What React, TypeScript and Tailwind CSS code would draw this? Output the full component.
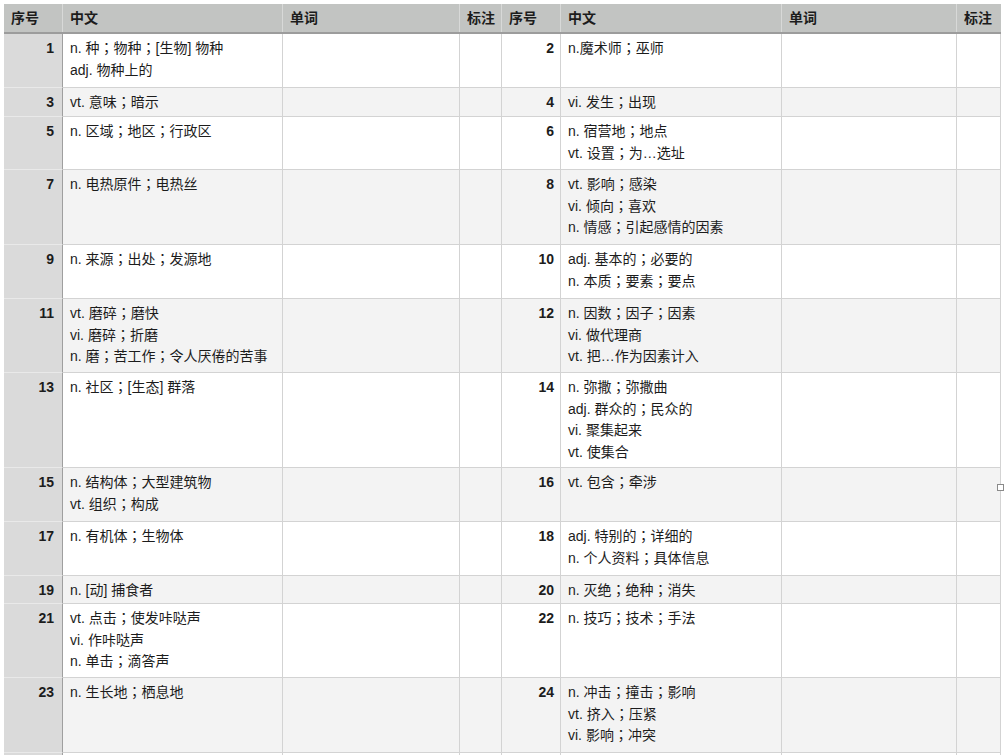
import React from "react";

type Row = {
  h: string;
  a: number;
  aText: string[];
  b: number;
  bText: string[];
};

// row heights follow the sheet, one class per row
const rows: Row[] = [
  { h: "h-[54px]", a: 1, aText: ["n. 种；物种；[生物] 物种", "adj. 物种上的"], b: 2, bText: ["n.魔术师；巫师"] },
  { h: "h-[29px]", a: 3, aText: ["vt. 意味；暗示"], b: 4, bText: ["vi. 发生；出现"] },
  { h: "h-[53px]", a: 5, aText: ["n. 区域；地区；行政区"], b: 6, bText: ["n. 宿营地；地点", "vt. 设置；为…选址"] },
  { h: "h-[75px]", a: 7, aText: ["n. 电热原件；电热丝"], b: 8, bText: ["vt. 影响；感染", "vi. 倾向；喜欢", "n. 情感；引起感情的因素"] },
  { h: "h-[54px]", a: 9, aText: ["n. 来源；出处；发源地"], b: 10, bText: ["adj. 基本的；必要的", "n. 本质；要素；要点"] },
  { h: "h-[74px]", a: 11, aText: ["vt. 磨碎；磨快", "vi. 磨碎；折磨", "n. 磨；苦工作；令人厌倦的苦事"], b: 12, bText: ["n. 因数；因子；因素", "vi. 做代理商", "vt. 把…作为因素计入"] },
  { h: "h-[95px]", a: 13, aText: ["n. 社区；[生态] 群落"], b: 14, bText: ["n. 弥撒；弥撒曲", "adj. 群众的；民众的", "vi. 聚集起来", "vt. 使集合"] },
  { h: "h-[54px]", a: 15, aText: ["n. 结构体；大型建筑物", "vt. 组织；构成"], b: 16, bText: ["vt. 包含；牵涉"] },
  { h: "h-[54px]", a: 17, aText: ["n. 有机体；生物体"], b: 18, bText: ["adj. 特别的；详细的", "n. 个人资料；具体信息"] },
  { h: "h-[28px]", a: 19, aText: ["n. [动] 捕食者"], b: 20, bText: ["n. 灭绝；绝种；消失"] },
  { h: "h-[74px]", a: 21, aText: ["vt. 点击；使发咔哒声", "vi. 作咔哒声", "n. 单击；滴答声"], b: 22, bText: ["n. 技巧；技术；手法"] },
  { h: "h-[75px]", a: 23, aText: ["n. 生长地；栖息地"], b: 24, bText: ["n. 冲击；撞击；影响", "vt. 挤入；压紧", "vi. 影响；冲突"] },
  { h: "h-[54px]", a: 25, aText: [], b: 26, bText: [] },
];

const cols = "grid grid-cols-[59px_220px_177px_42px_59px_221px_175px_44px]";
const line = "border-r border-b border-[#d3d3d3]";

// the sheet centres the full-width semicolon, the TC face does the same
const Text = ({ t }: { t: string }) => {
  const parts = t.split("；");
  return (
    <>
      {parts.map((p, i) => (
        <React.Fragment key={i}>
          {p}
          {i < parts.length - 1 && (
            <span className="leading-[0]" style={{ fontFamily: '"Noto Sans CJK TC", sans-serif' }}>
              ；
            </span>
          )}
        </React.Fragment>
      ))}
    </>
  );
};

const Lines = ({ items }: { items: string[] }) => (
  <div className="pl-[7px] pt-[4px] leading-[21.5px]">
    {items.map((t, i) => (
      <div key={i} className="whitespace-nowrap">
        <Text t={t} />
      </div>
    ))}
  </div>
);

const App = () => {
  const headers = ["序号", "中文", "单词", "标注", "序号", "中文", "单词", "标注"];

  return (
    <div
      className="relative h-[755px] overflow-hidden bg-white pl-[4px] pt-[4px] text-[14px] text-[#1c1c1c]"
      style={{ fontFamily: '"Liberation Sans", "Noto Sans CJK SC", sans-serif' }}
    >
      <div className="w-[997px]">
        <div className={`${cols} h-[30px] bg-[#c2c4c2] border-b-2 border-[#9c9c9c] font-bold`}>
          {headers.map((h, i) => (
            <div
              key={i}
              className={`flex items-center pl-[7px] border-r ${i === 7 ? "border-[#c2c4c2]" : "border-[#d8d9d8]"}`}
            >
              {h}
            </div>
          ))}
        </div>

        {rows.map((r, i) => {
          const bg = i % 2 === 1 ? "bg-[#f3f3f3]" : "bg-white";
          return (
            <div key={r.a} className={`${cols} ${r.h}`}>
              <div className="bg-[#dadada] border-b border-r border-b-[#e9e9e9] border-r-[#9f9f9f] pr-[8px] pt-[4px] text-right font-bold leading-[21.5px]">
                {r.aText.length ? r.a : ""}
              </div>
              <div className={`${bg} ${line}`}>
                <Lines items={r.aText} />
              </div>
              <div className={`${bg} ${line}`} />
              <div className={`${bg} ${line}`} />
              <div className={`${bg} ${line} pr-[6px] pt-[4px] text-right font-bold leading-[21.5px]`}>
                {r.bText.length ? r.b : ""}
              </div>
              <div className={`${bg} ${line}`}>
                <Lines items={r.bText} />
              </div>
              <div className={`${bg} ${line}`} />
              <div className={`${bg} ${line}`} />
            </div>
          );
        })}
      </div>

      {/* table resize handle */}
      <div className="absolute left-[997px] top-[484px] h-[7px] w-[7px] border border-[#8a8a8a] bg-white" />
    </div>
  );
};

export default App;
